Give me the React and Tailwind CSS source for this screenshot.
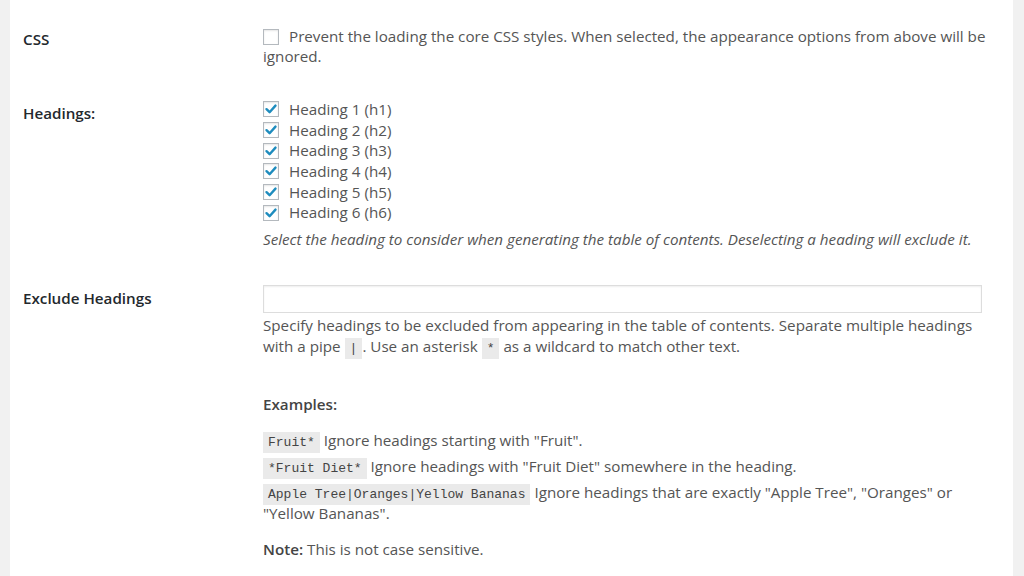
import React from "react";

function Check({ checked, className = "" }) {
  return (
    <span className={"inline-flex items-center justify-center w-[16px] h-[16px] border border-[#b4b9be] bg-white shadow-[inset_0_1px_2px_rgba(0,0,0,0.1)] shrink-0 " + className}>
      {checked && (
        <svg width="14" height="14" viewBox="0 0 14 14">
          <path d="M2.5 7.2 L5.6 10.2 L11.5 3.6" fill="none" stroke="#1e8cbe" strokeWidth="2.4" strokeLinecap="round" strokeLinejoin="round" />
        </svg>
      )}
    </span>
  );
}

function Code({ children }) {
  return (
    <code className="bg-[#eaeaea] px-[5px] py-[3px] text-[13px] leading-none text-[#444] font-['Liberation_Mono',monospace]">{children}</code>
  );
}

export default function App() {
  const headings = [1, 2, 3, 4, 5, 6];
  return (
    <div className="flex w-[1024px] h-[576px] overflow-hidden bg-[#f1f1f1] font-['Open_Sans',sans-serif] text-[15.2px] leading-[21px] text-[#555]">
      <div className="w-[10px] shrink-0" />
      <div className="w-[1003px] bg-white pl-[13px] pr-[24px]">
        {/* CSS row */}
        <div className="flex pt-[26px]">
          <div className="w-[240px] shrink-0 font-semibold text-[#23282d] pt-[3px]">CSS</div>
          <div className="flex-1 leading-[20px]">
            <Check className="align-[-3px] mr-[10px]" />
            Prevent the loading the core CSS styles. When selected, the appearance options from above will be ignored.
          </div>
        </div>
        {/* Headings */}
        <div className="flex pt-[33px]">
          <div className="w-[240px] shrink-0 font-semibold text-[#23282d] pt-[4px]">Headings:</div>
          <div className="flex-1">
            <div className="flex flex-col">
              {headings.map((n) => (
                <label key={n} className="flex items-center gap-[10px] h-[20.7px]">
                  <Check checked />
                  <span>Heading {n} (h{n})</span>
                </label>
              ))}
            </div>
            <p className="italic mt-[6px]">Select the heading to consider when generating the table of contents. Deselecting a heading will exclude it.</p>
          </div>
        </div>
        {/* Exclude headings */}
        <div className="flex pt-[35px]">
          <div className="w-[240px] shrink-0 font-semibold text-[#23282d] pt-[3px]">Exclude Headings</div>
          <div className="flex-1">
            <div className="w-[719px] h-[28px] border border-[#ddd] shadow-[inset_0_1px_2px_rgba(0,0,0,0.07)] bg-white" />
            <p className="mt-[2px] pr-[7px]">
              Specify headings to be excluded from appearing in the table of contents. Separate multiple headings with a pipe <Code>|</Code>. Use an asterisk <Code>*</Code> as a wildcard to match other text.
            </p>
            <p className="font-semibold mt-[37px] text-[#444]">Examples:</p>
            <div className="mt-[15px] flex flex-col gap-[5px]">
              <p><Code>Fruit*</Code> Ignore headings starting with "Fruit".</p>
              <p><Code>*Fruit Diet*</Code> Ignore headings with "Fruit Diet" somewhere in the heading.</p>
              <p className="pr-[7px]"><Code>Apple Tree|Oranges|Yellow Bananas</Code> Ignore headings that are exactly "Apple Tree", "Oranges" or "Yellow Bananas".</p>
            </div>
            <p className="mt-[15px]"><span className="font-semibold text-[#444]">Note:</span> This is not case sensitive.</p>
          </div>
        </div>
      </div>
      <div className="flex-1" />
    </div>
  );
}
